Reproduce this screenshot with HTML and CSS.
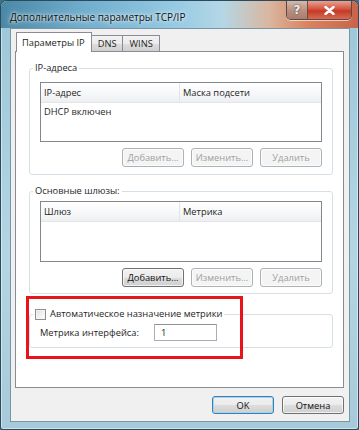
FILE: index.html
```html
<!DOCTYPE html>
<html lang="ru">
<head>
    <meta charset="UTF-8">
    <meta name="viewport" content="width=device-width, initial-scale=1.0">
    <title>Дополнительные параметры TCP/IP</title>
    <link rel="stylesheet" href="styles.css">
</head>
<body>
    <div class="window">
        <div class="titlebar">
            <span class="title">Дополнительные параметры TCP/IP</span>
            <div class="caption-btns">
                <span class="cap-btn help">?</span>
                <span class="cap-btn close">
                    <svg width="11" height="9" viewBox="0 0 11 9">
                        <path d="M1.5 1 L9.5 8 M9.5 1 L1.5 8" stroke="#fff" stroke-width="2.4" stroke-linecap="round"/>
                    </svg>
                </span>
            </div>
        </div>

        <div class="client">
            <div class="tabs">
                <span class="tab active">Параметры IP</span>
                <span class="tab">DNS</span>
                <span class="tab">WINS</span>
            </div>

            <div class="panel">
                <fieldset class="group group-ip">
                    <legend>IP-адреса</legend>
                    <div class="list list-ip">
                        <div class="list-head">
                            <span class="col-first">IP-адрес</span>
                            <span class="col-second">Маска подсети</span>
                        </div>
                        <div class="list-row">DHCP включен</div>
                    </div>
                    <div class="btn-row">
                        <button disabled>Добавить...</button>
                        <button disabled>Изменить...</button>
                        <button disabled>Удалить</button>
                    </div>
                </fieldset>

                <fieldset class="group group-gw">
                    <legend>Основные шлюзы:</legend>
                    <div class="list list-gw">
                        <div class="list-head">
                            <span class="col-first">Шлюз</span>
                            <span class="col-second">Метрика</span>
                        </div>
                    </div>
                    <div class="btn-row">
                        <button>Добавить...</button>
                        <button disabled>Изменить...</button>
                        <button disabled>Удалить</button>
                    </div>
                </fieldset>

                <fieldset class="group group-metric">
                    <legend>
                        <label class="check"><span class="check-box"></span>Автоматическое назначение метрики</label>
                    </legend>
                    <div class="metric-row">
                        <span>Метрика интерфейса:</span>
                        <span class="text-input">1</span>
                    </div>
                </fieldset>

                <div class="highlight"></div>
            </div>

            <div class="footer">
                <button class="default">OK</button>
                <button>Отмена</button>
            </div>
        </div>
    </div>
</body>
</html>
```

FILE: styles.css
```css
* {
    box-sizing: border-box;
}

body {
    margin: 0;
    padding: 0;
    width: 359px;
    height: 430px;
    overflow: hidden;
    font-family: "Open Sans", "Noto Sans", sans-serif;
    font-size: 9.3px;
    color: #1e1e1e;
    background-color: #3e6f85;
}

.window {
    width: 359px;
    height: 430px;
    display: flex;
    flex-direction: column;
    border: 1px solid #2b4a5a;
    border-radius: 7px 7px 3px 3px;
    background: linear-gradient(180deg, #9cc6d8 0%, #b3d6e4 60%, #a6cad9 100%);
    box-shadow: inset 0 0 0 1px rgba(255, 255, 255, 0.45);
}

.titlebar {
    height: 27px;
    flex: none;
    display: flex;
    align-items: flex-start;
    border-radius: 6px 6px 0 0;
    background: linear-gradient(90deg, #4a88a6 0%, #6faccc 22%, #94c9e3 48%, #b4d7e6 62%, #d9b7a0 75%, #d9835f 86%, #c7654b 100%);
}

.title {
    padding: 9px 0 0 9px;
    font-size: 10px;
    color: #111;
    text-shadow: 0 0 6px rgba(255, 255, 255, 0.9), 0 0 3px rgba(255, 255, 255, 0.9);
}

.caption-btns {
    margin-left: auto;
    margin-right: 6px;
    display: flex;
    border: 1px solid #5b4a44;
    border-top: none;
    border-radius: 0 0 5px 5px;
    overflow: hidden;
    box-shadow: 0 1px 0 rgba(255, 255, 255, 0.6);
}

.cap-btn {
    height: 18px;
    display: flex;
    align-items: center;
    justify-content: center;
}

.help {
    width: 21px;
    font-family: "DejaVu Sans", sans-serif;
    font-weight: bold;
    font-size: 12px;
    color: #eee;
    text-shadow: 0 0 2px #333;
    background: linear-gradient(180deg, #d9b8a8 0%, #b99282 50%, #a87c6c 100%);
    border-right: 1px solid #6e4a40;
}

.close {
    width: 43px;
    background: linear-gradient(180deg, #e8a191 0%, #d5533f 45%, #c33a26 55%, #d86a52 100%);
}

.client {
    flex: 1;
    margin: 0 8px 7px 9px;
    padding: 3px 5px 0 4px;
    background-color: #f0f0f0;
    border: 1px solid #7c95a2;
    display: flex;
    flex-direction: column;
}

.tabs {
    display: flex;
    align-items: flex-end;
    padding-left: 1px;
    height: 19px;
    position: relative;
    z-index: 1;
}

.tab {
    height: 16px;
    padding: 0 6px;
    border: 1px solid #898c95;
    border-bottom: none;
    border-left: none;
    background: linear-gradient(180deg, #f2f2f2 0%, #ebebeb 50%, #dddddd 51%, #cfcfcf 100%);
    line-height: 15px;
}

.tab.active {
    height: 20px;
    margin-bottom: -1px;
    border-left: 1px solid #898c95;
    background: #fff;
    padding: 0 6px 0 5px;
    line-height: 19px;
}

.panel {
    height: 337px;
    position: relative;
    background-color: #fff;
    border: 1px solid #898c95;
    padding: 9px 10px 0 13px;
}

.group {
    margin: 0;
    border: 1px solid #d5dfe5;
    border-radius: 3px;
    padding: 7px 10px 7px 10px;
    box-shadow: inset 1px 1px 0 #fff;
}

.group legend {
    margin-left: -7px;
    padding: 0 2px;
    line-height: 14px;
}

.group-gw {
    margin-top: 9px;
    padding-top: 3px;
    padding-bottom: 6px;
}

.group-metric {
    margin-top: 13px;
    padding-top: 3px;
    padding-bottom: 6px;
}

.list {
    border: 1px solid #828790;
    background-color: #fff;
}

.list-ip {
    height: 60px;
}

.list-gw {
    height: 61px;
}

.list-head {
    display: flex;
    height: 20px;
    align-items: center;
    background: linear-gradient(180deg, #ffffff 0%, #f6f7f8 60%, #eeeff2 100%);
    border-bottom: 1px solid #e3e4e7;
}

.col-first {
    width: 139px;
    padding-left: 3px;
    height: 100%;
    line-height: 19px;
    border-right: 1px solid #e3e4e7;
}

.col-second {
    padding-left: 3px;
}

.list-row {
    padding: 2px 0 0 3px;
}

.btn-row {
    display: flex;
    justify-content: flex-end;
    gap: 7px;
    margin-top: 6px;
}

button {
    width: 62px;
    height: 19px;
    padding: 0;
    font-family: "Open Sans", "Noto Sans", sans-serif;
    font-size: 9.3px;
    color: #111;
    border: 1px solid #707070;
    border-radius: 3px;
    background: linear-gradient(180deg, #f2f2f2 0%, #ebebeb 50%, #dddddd 51%, #cfcfcf 100%);
    box-shadow: inset 0 0 0 1px rgba(255, 255, 255, 0.7);
}

button:disabled {
    color: #a0a0a0;
    border-color: #adb2b5;
    background: #f4f4f4;
}

.check {
    display: flex;
    align-items: center;
    gap: 4px;
}

.check-box {
    width: 11px;
    height: 11px;
    border: 1px solid #8e8f8f;
    background: linear-gradient(135deg, #dcdcdc 0%, #f4f4f4 60%, #fff 100%);
    box-shadow: inset 0 0 0 1px #f4f4f4;
}

.metric-row {
    display: flex;
    align-items: center;
    gap: 15px;
}

.text-input {
    width: 63px;
    height: 17px;
    border: 1px solid #abadb3;
    border-top-color: #8e9298;
    background-color: #fff;
    padding-left: 6px;
    line-height: 15px;
}

.highlight {
    position: absolute;
    left: 10px;
    top: 244px;
    width: 217px;
    height: 63px;
    border: 3px solid #e8131b;
}

.footer {
    display: flex;
    justify-content: flex-end;
    gap: 8px;
    padding-top: 8px;
}

.footer button {
    height: 18px;
}

button.default {
    border-color: #3c7fb1;
    box-shadow: inset 0 0 0 1px #9fd5f3;
}
```
